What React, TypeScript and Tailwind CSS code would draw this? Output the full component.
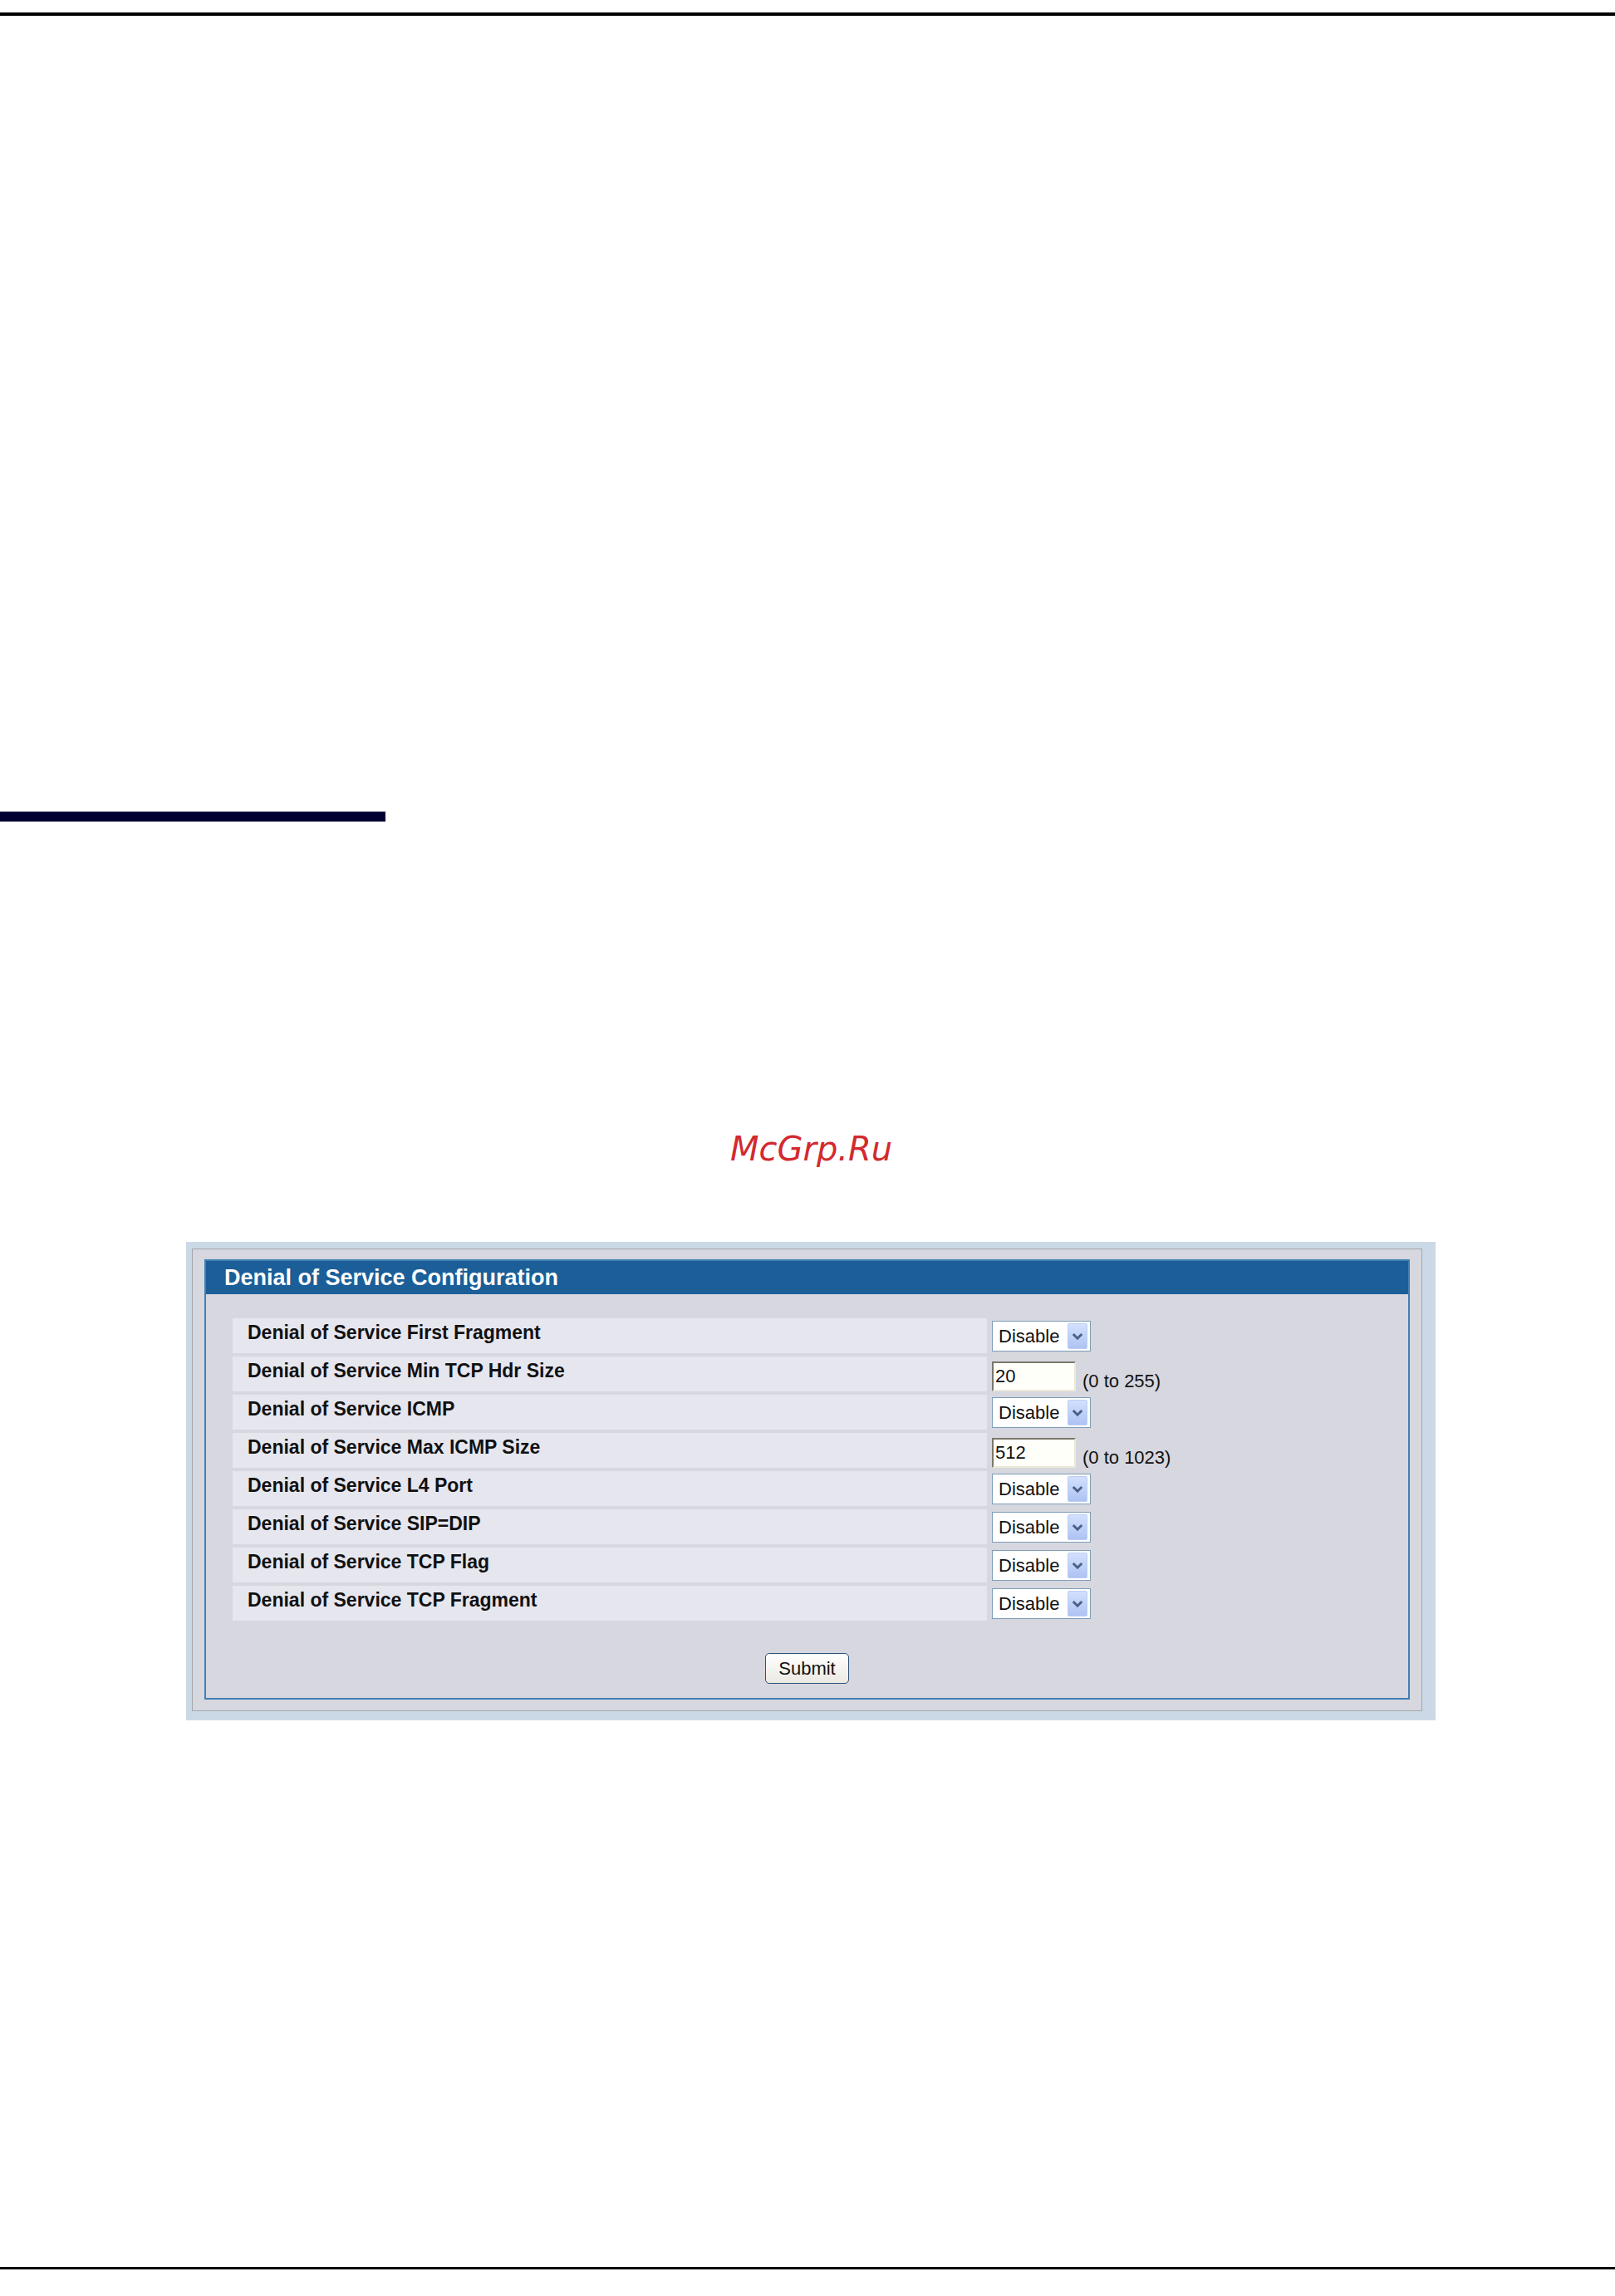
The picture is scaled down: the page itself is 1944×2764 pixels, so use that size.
import React from 'react';

type Row = { label: string; kind: 'select' | 'input'; value?: string; range?: string };

const rows: Row[] = [
  { label: 'Denial of Service First Fragment', kind: 'select' },
  { label: 'Denial of Service Min TCP Hdr Size', kind: 'input', value: '20', range: '(0 to 255)' },
  { label: 'Denial of Service ICMP', kind: 'select' },
  { label: 'Denial of Service Max ICMP Size', kind: 'input', value: '512', range: '(0 to 1023)' },
  { label: 'Denial of Service L4 Port', kind: 'select' },
  { label: 'Denial of Service SIP=DIP', kind: 'select' },
  { label: 'Denial of Service TCP Flag', kind: 'select' },
  { label: 'Denial of Service TCP Fragment', kind: 'select' },
];

const SelectBox = () => (
  <div className="mt-[3px] flex h-[37px] w-[119px] items-stretch border border-[#7f9db9] bg-white">
    <span className="flex-1 pl-[7px] text-[22px] leading-[35px] text-[#111]">Disable</span>
    <span className="my-[2px] mr-[3px] flex w-[24px] items-center justify-center rounded-[2px] border border-[#bccdf3] bg-gradient-to-b from-[#d3e0fd] to-[#adc3f3]">
      <svg width="14" height="10" viewBox="0 0 14 10">
        <path d="M1.8 2 L7 7.2 L12.2 2" fill="none" stroke="#4d6185" strokeWidth="3" />
      </svg>
    </span>
  </div>
);

const NumberBox = ({ value, range }: { value: string; range: string }) => (
  <div className="flex items-start">
    <div className="mt-[6px] h-[36px] w-[101px] border-2 border-t-[#7b786b] border-l-[#7b786b] border-r-[#ece9d8] border-b-[#ece9d8] bg-[#fffffa] pl-[2px] text-[22px] leading-[32px] text-[#111]">
      {value}
    </div>
    <span className="ml-[8px] mt-[18px] text-[22px] leading-[24px] text-[#111]">{range}</span>
  </div>
);

export default function App() {
  return (
    <div className="w-[1944px] bg-white font-['Liberation_Sans',Arial,sans-serif]">
      <div className="mt-[15px] h-[4px] w-full bg-black" />
      <div className="mt-[958px] h-[12px] w-[464px] bg-[#000033]" />

      <div className="mt-[371px] pl-[879px] font-['DejaVu_Sans',sans-serif] text-[40px] italic leading-[46px] text-[#d32a2e]">
        McGrp.Ru
      </div>

      <div className="ml-[224px] mt-[89px] w-[1504px] bg-[#cbd9e6] pb-[11px] pl-[7px] pr-[16px] pt-[8px]">
        <div className="border border-[#a3a7ac] bg-[#d6d7df] pb-[13px] pl-[14px] pr-[14px] pt-[12px]">
          <div className="flex flex-col border-2 border-[#3f7fb4]">
            <div className="h-[40px] bg-[#1b5e98] pl-[22px] text-[27px] font-bold leading-[40px] text-white">
              Denial of Service Configuration
            </div>

            <div className="mt-[29px] flex flex-col gap-[4px] pl-[32px]">
              {rows.map((r) => (
                <div key={r.label} className="flex h-[42px] gap-[6px]">
                  <div className="w-[908px] bg-[#e6e6ef] pl-[18px] pt-[4px] text-[23px] font-bold leading-[26px] text-[#111]">
                    {r.label}
                  </div>
                  {r.kind === 'select' ? <SelectBox /> : <NumberBox value={r.value!} range={r.range!} />}
                </div>
              ))}
            </div>

            <div className="mt-[39px] mb-[17px] flex justify-center">
              <div className="flex h-[37px] w-[101px] items-center justify-center rounded-[5px] border border-[#2d5278] bg-gradient-to-b from-white to-[#ebe9e1] text-[22px] text-[#111]">
                Submit
              </div>
            </div>
          </div>
        </div>
      </div>

      <div className="mt-[658px] h-[3px] w-full bg-black" />
      <div className="h-[32px]" />
    </div>
  );
}
